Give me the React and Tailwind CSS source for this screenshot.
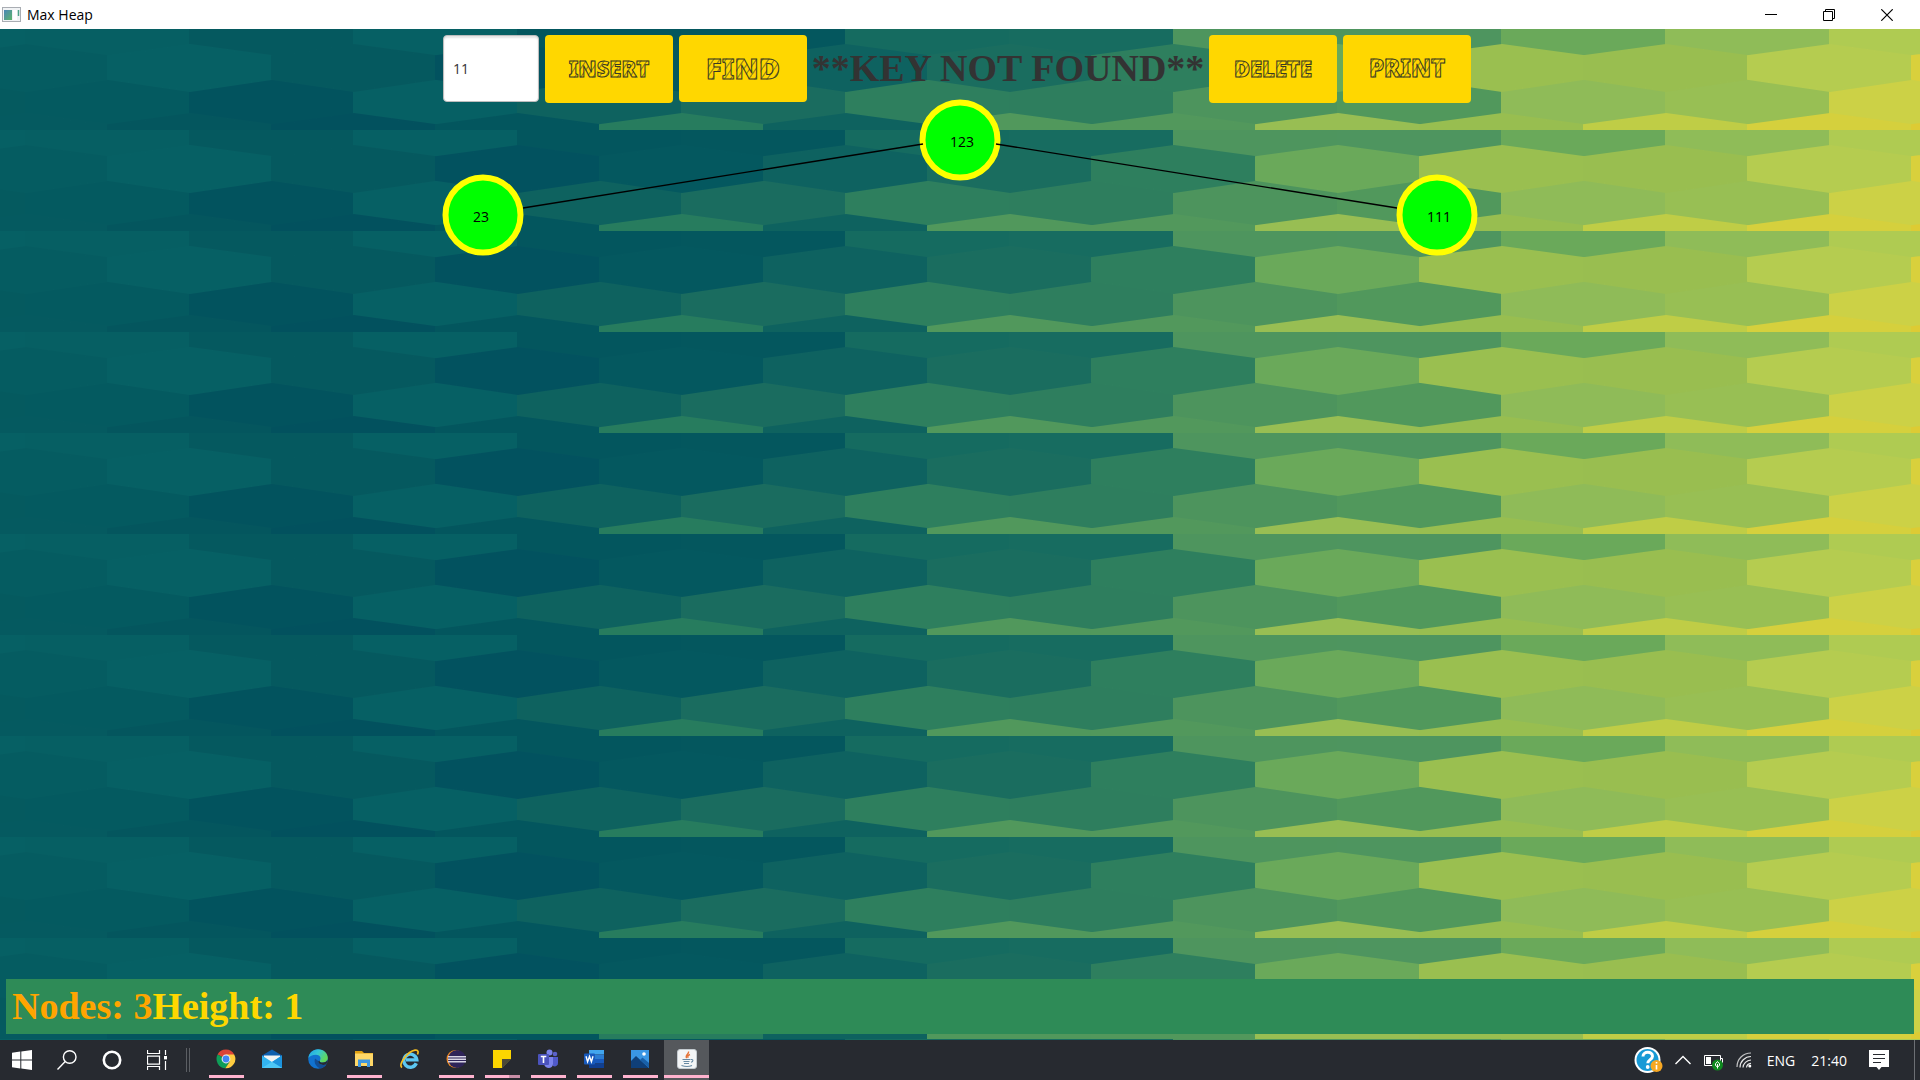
import React from "react";

const STEP = 164;
const EVEN_START = 26;
const ODD_START = 108;

/* One colour per hexagon, left to right, for each of the four rows in a tile. */
const ROWS = [
  {
    start: EVEN_START, top: -7, upper: 5, lower: 16, bottom: 27,
    colors: ["#066064", "#065f63", "#05595f", "#066064", "#03565e", "#04575e", "#156b60", "#176c60", "#4e955e", "#4e955f", "#6aa95a", "#8fbc58", "#afcb52"],
  },
  {
    start: EVEN_START, top: 50, upper: 62, lower: 85, bottom: 96,
    colors: ["#055a5f", "#045a60", "#02535e", "#066064", "#0e625f", "#1a6c5f", "#2e7f5e", "#2e7e5e", "#4d945d", "#51985c", "#8fbb58", "#98bf54", "#ccd146"],
  },
  {
    start: ODD_START, top: 16, upper: 27, lower: 50, bottom: 62,
    colors: ["#055c61", "#066064", "#05595f", "#02525f", "#04585f", "#0e6260", "#1a6d5f", "#2e7f5e", "#6aa95a", "#9abf50", "#99be50", "#b5cc50", "#d9d03c"],
  },
  {
    start: ODD_START, top: 85, upper: 96, lower: 119, bottom: 130,
    colors: ["#055a60", "#04565e", "#02515e", "#03565e", "#277c5e", "#0e625f", "#51985c", "#52985c", "#98be53", "#98be50", "#bfcd46", "#d5d03d", "#ddcb34"],
  },
];

function hexPoints(row, i) {
  const left = row.start + (i - 1) * STEP;
  const mid = left + STEP / 2;
  const right = left + STEP;
  if (row.top < 0) {
    return `${left},-4 ${right},-4 ${right},${row.lower} ${mid},${row.bottom} ${left},${row.lower}`;
  }
  return `${mid},${row.top} ${right},${row.upper} ${right},${row.lower} ${mid},${row.bottom} ${left},${row.lower} ${left},${row.upper}`;
}

function Backdrop() {
  return (
    <svg className="absolute inset-0 h-full w-full" aria-hidden="true">
      <defs>
        <pattern id="hexes" width="1920" height="101" patternUnits="userSpaceOnUse">
          {ROWS.map((row, r) =>
            row.colors.map((c, i) => (
              <polygon key={`${r}-${i}`} points={hexPoints(row, i)} fill={c} stroke={c} strokeWidth="2" />
            ))
          )}
        </pattern>
      </defs>
      <rect width="100%" height="100%" fill="url(#hexes)" />
    </svg>
  );
}

function TitleBar() {
  const control = "flex h-full w-[58px] items-center justify-center";
  return (
    <header className="flex h-[29px] items-center bg-white pl-[2px] pr-1">
      <svg width="19" height="16" viewBox="0 0 19 16" aria-hidden="true">
        <defs>
          <linearGradient id="appIcon" x1="0" y1="0" x2="1" y2="1">
            <stop offset="0" stopColor="#4a86b8" />
            <stop offset="1" stopColor="#5db56a" />
          </linearGradient>
        </defs>
        <rect x="0.5" y="0.5" width="18" height="14" fill="#f1f3f5" stroke="#a9adb3" />
        <rect x="2" y="3" width="8" height="10" fill="url(#appIcon)" />
        <rect x="11" y="3" width="4" height="10" fill="#fff" />
        <path d="M16.5 3v6" stroke="#4fa389" strokeWidth="1.5" />
      </svg>
      <h1 className="ml-[6px] text-[14px] leading-5 text-black">Max Heap</h1>
      <div className="ml-auto flex h-full">
        <button className={control} aria-label="Minimize">
          <svg width="12" height="12" viewBox="0 0 12 12"><path d="M0 5.5h12" stroke="#000" /></svg>
        </button>
        <button className={control} aria-label="Restore">
          <svg width="12" height="12" viewBox="0 0 12 12" fill="none" stroke="#000">
            <path d="M0.5 2.5h9v9h-9zM2.5 2.5v-2h9v9h-2" />
          </svg>
        </button>
        <button className={control} aria-label="Close">
          <svg width="12" height="12" viewBox="0 0 12 12"><path d="M0.3 0.3l11.4 11.4M11.7 0.3L0.3 11.7" stroke="#000" strokeWidth="1.2" /></svg>
        </button>
      </div>
    </header>
  );
}

const sketch =
  "bg-[repeating-linear-gradient(125deg,#ffd700_0px,#ffd700_3px,#8f8218_4px,#e6c40a_5px)] bg-clip-text text-transparent [-webkit-text-stroke:1px_#3a3a22] font-black font-['Noto_Sans']";

function ToolButton({ children, size, height }) {
  return (
    <button className={`${height} flex w-32 items-center justify-center rounded-[4px] bg-[#ffd700] pb-[2px]`}>
      <span className={`${sketch} ${size}`}>{children}</span>
    </button>
  );
}

function Toolbar() {
  return (
    <div className="flex items-start justify-center gap-[6px] pr-[6px] pt-[6px]">
      <input
        type="text"
        aria-label="Key"
        defaultValue="11"
        className="h-[67px] w-24 rounded-[4px] border border-[#bdbdbd] bg-white px-[9px] text-[14px] text-[#333] shadow-[inset_0_2px_2px_#e4e4e4] outline-none"
      />
      <ToolButton height="h-[68px]" size="text-[22px]">INSERT</ToolButton>
      <ToolButton height="h-[67px]" size="text-[29px]">FIND</ToolButton>
      <p className="flex h-[67px] w-[390px] items-center justify-center whitespace-nowrap font-['Liberation_Serif'] text-[38px] font-bold text-[#333]">
        **KEY NOT FOUND**
      </p>
      <ToolButton height="h-[68px]" size="text-[22px]">DELETE</ToolButton>
      <ToolButton height="h-[68px]" size="text-[24px]">PRINT</ToolButton>
    </div>
  );
}

const NODES = [
  { key: "123", x: 0, y: 37, tx: -10 },
  { key: "23", x: -477, y: 112, tx: -487 },
  { key: "111", x: 477, y: 112, tx: 467 },
];

function Tree() {
  return (
    <svg className="w-full flex-1 overflow-visible" role="img" aria-label="Heap tree">
      <svg x="50%" className="overflow-visible">
        {NODES.map((n) => (
          <g key={n.key}>
            <circle cx={n.x} cy={n.y} r="37.5" fill="#00ff00" stroke="#ffff00" strokeWidth="6" />
            <text x={n.tx} y={n.y + 7} fontSize="14" fill="#000">{n.key}</text>
          </g>
        ))}
        <path d="M-37 41L-437 105M36 41L437 105" stroke="#000" strokeWidth="1.3" />
      </svg>
    </svg>
  );
}

const Windows = () => (
  <svg width="20" height="20" viewBox="0 0 20 20" fill="#fff">
    <path d="M0 2.8L8.3 1.6V9.5H0zM9.3 1.4L20 0v9.5H9.3zM0 10.5h8.3v7.9L0 17.2zM9.3 10.5H20V20L9.3 18.5z" />
  </svg>
);
const Search = () => (
  <svg width="20" height="20" viewBox="0 0 20 20" fill="none" stroke="#fff" strokeWidth="1.4">
    <circle cx="12.7" cy="7" r="6.3" /><path d="M8.2 11.6L0.5 19.4" />
  </svg>
);
const Cortana = () => (
  <svg width="20" height="20" viewBox="0 0 20 20" fill="none" stroke="#fff">
    <circle cx="10" cy="10" r="8.2" strokeWidth="2.6" />
  </svg>
);
const TaskView = () => (
  <svg width="20" height="20" viewBox="0 0 20 20" fill="none" stroke="#fff" strokeWidth="1.2">
    <path d="M0.5 0v3.5h12V0M0.5 20v-3.5h12V20M0.5 6.2h12v8H0.5zM18.5 0v5M18.5 11v9" />
    <path d="M17 6h3v3.4h-3z" fill="#fff" stroke="none" />
  </svg>
);
const Chrome = () => (
  <svg width="20" height="20" viewBox="0 0 20 20">
    <path d="M10 10L1.6 5.6A9.3 9.3 0 0 1 18.2 5.6z" fill="#db4437" />
    <path d="M10 10L1.6 5.6A9.3 9.3 0 0 0 9.3 19.3L14 12.3z" fill="#0f9d58" />
    <path d="M10 5.6H18.2A9.3 9.3 0 0 1 9.3 19.3L14 12.3z" fill="#ffcd40" />
    <circle cx="10" cy="10" r="4.4" fill="#f1f1f1" /><circle cx="10" cy="10" r="3.4" fill="#4285f4" />
  </svg>
);
const Mail = () => (
  <svg width="20" height="20" viewBox="0 0 20 20">
    <path d="M0 6.5L10 0.5l10 6v4H0z" fill="#0f5fae" />
    <path d="M2 6.5h16v8H2z" fill="#f3f3f3" />
    <path d="M0 6.5l10 6.5 10-6.5V19H0z" fill="#32b4f0" />
    <path d="M10 13l10-6.5V19z" fill="#1c93dd" /><path d="M0 19l10-6.3L20 19z" fill="#4cc7f6" />
  </svg>
);
const Edge = () => (
  <svg width="20" height="20" viewBox="0 0 20 20">
    <defs>
      <linearGradient id="edgeTop" x1="0" y1="0" x2="1" y2="0.5">
        <stop offset="0" stopColor="#1fa0e6" /><stop offset="0.5" stopColor="#35c7d6" /><stop offset="1" stopColor="#62d957" />
      </linearGradient>
    </defs>
    <circle cx="10" cy="10" r="9.8" fill="#1172cf" />
    <path d="M0.3 9C1 4 5 0.2 10 0.2c6 0 9.8 4.3 9.8 8.5 0 3-2.2 4.8-5 4.8-2.4 0-3.5-1-3-1.8 2-3.2-.3-6-3.8-6C4.500 5.700 1.500 7 .3 9z" fill="url(#edgeTop)" />
    <path d="M7 9.500c-1.500 4.500 1.500 9 6 10 2.500-.8 4.500-2.300 5.600-4.300-4 2-8 .5-8.300-3.200z" fill="#124e95" />
    <path d="M11.8 11.7c-.8 1 .6 1.800 3 1.800 2 0 3.500-.8 4.300-2.200l.4 1-1.200 3c-3.500 1.500-7.800.4-8-3.200z" fill="#272a30" />
  </svg>
);
const Explorer = () => (
  <svg width="20" height="20" viewBox="0 0 20 20">
    <path d="M1 2h7l2 2h9v5H1z" fill="#e0a010" /><path d="M1 4.500h18V17H1z" fill="#ffd868" />
    <path d="M4 18v-7.500h12V18h-3v-4H7v4z" fill="#3f97e0" />
  </svg>
);
const Ie = () => (
  <svg width="20" height="20" viewBox="0 0 20 20" fill="none">
    <path d="M16.300 14.300A6.500 6.500 0 1 1 16.800 10.900H6" stroke="#5cc8f2" strokeWidth="3.4" />
    <path d="M2 18.500C-2 15.500 7.500 2.500 15 1.200c3.500-.6 3.500 1.800 2.500 4.300" stroke="#f5bd22" strokeWidth="1.700" />
  </svg>
);
const Eclipse = () => (
  <svg width="20" height="20" viewBox="0 0 20 20">
    <circle cx="9.500" cy="10" r="9" fill="#ee8a25" /><circle cx="11" cy="10" r="9" fill="#2f2459" />
    <path d="M2 7h18v1.500H2zM2 9.500h18V11H2zM2 12h18v1.500H2z" fill="#d8d5e4" />
  </svg>
);
const Sticky = () => (
  <svg width="20" height="20" viewBox="0 0 20 20">
    <path d="M1 1h18v9l-9 9H1z" fill="#fcd500" /><path d="M1 10h9v9H1z" fill="#fcd500" />
    <path d="M19 10v9h-9z" fill="#272a30" /><path d="M10 10h9l-9 9z" fill="#4b4938" />
  </svg>
);
const Teams = () => (
  <svg width="20" height="20" viewBox="0 0 20 20">
    <circle cx="17" cy="5" r="2.300" fill="#5b62c8" /><circle cx="11.500" cy="3.500" r="3" fill="#7b83eb" />
    <path d="M14 8h6v6c0 3-3 4-5 3z" fill="#5059c9" /><path d="M6 8h9v7c0 5-8 5.500-9 0z" fill="#7b83eb" />
    <rect x="0" y="5" width="11" height="11" rx="1" fill="#4b53bc" />
    <path d="M2.800 7.500h5.500M5.500 7.500v6.500" stroke="#fff" strokeWidth="1.600" />
  </svg>
);
const Word = () => (
  <svg width="20" height="20" viewBox="0 0 20 20">
    <path d="M5 1h15v4.500H5z" fill="#41a5ee" /><path d="M5 5.500h15V10H5z" fill="#2b7cd3" />
    <path d="M5 10h15v4.500H5z" fill="#185abd" /><path d="M5 14.500h15V19H5z" fill="#103f91" />
    <rect x="0" y="4.500" width="11" height="11" rx="1" fill="#185abd" />
    <path d="M2 7.200l1.600 5.600 1.900-5.400 1.900 5.400L9 7.200" fill="none" stroke="#fff" strokeWidth="1.400" />
  </svg>
);
const Photos = () => (
  <svg width="20" height="20" viewBox="0 0 20 20">
    <path d="M1 1h18v18H1z" fill="#3a96e4" /><path d="M1 12l5-5 13 12H1z" fill="#0f3f78" />
    <path d="M10 11l2.500-2.500L19 14v5z" fill="#1960a8" /><circle cx="14" cy="5" r="1.800" fill="#fff" />
  </svg>
);
const Java = () => (
  <svg width="20" height="20" viewBox="0 0 20 20" fill="none">
    <rect x="0.500" y="0.500" width="19" height="19" rx="2.500" fill="#f3f5f6" stroke="#c4cbd0" />
    <path d="M11.500 2.500c1 2.500-4 3.500-1.800 6.700M13 5.500c-2 .8-2.800 1.900-1.700 3.200" stroke="#e5743a" strokeWidth="1.400" />
    <path d="M5.500 10.500h8M6.500 12.500h6M7 14.500h5M4.500 16.500c3 1 8 1 10.500 0M14 10.500c2.500-.5 2.500 2 0 2.800" stroke="#6689a3" strokeWidth="1.100" />
  </svg>
);

const SYSTEM = [
  ["Start", Windows],
  ["Search", Search],
  ["Cortana", Cortana],
  ["Task View", TaskView],
];

const APPS = [
  ["Chrome", Chrome, "open"],
  ["Mail", Mail, ""],
  ["Edge", Edge, ""],
  ["File Explorer", Explorer, "open"],
  ["Internet Explorer", Ie, ""],
  ["Eclipse", Eclipse, "open"],
  ["Sticky Notes", Sticky, "multi"],
  ["Teams", Teams, "open"],
  ["Word", Word, "open"],
  ["Photos", Photos, "open"],
  ["Java", Java, "active"],
];

function AppButton({ name, Icon, state }) {
  return (
    <button
      aria-label={name}
      className={`flex h-full flex-col items-center justify-between pt-[9px] ${state === "active" ? "ml-px w-[45px] bg-[#55585c]" : "w-[46px]"} pb-[2px]`}
    >
      <Icon />
      {state === "open" && <span className="h-[3px] w-[35px] bg-[#ffb3cf]" />}
      {state === "active" && <span className="h-[3px] w-full bg-[#ffb3cf]" />}
      {state === "multi" && (
        <span className="flex h-[3px] w-[35px]">
          <span className="w-6 bg-[#ffb3cf]" />
          <span className="flex-1 bg-[#c98fa8]" />
        </span>
      )}
    </button>
  );
}

function Tray() {
  return (
    <div className="ml-auto flex h-full items-center text-[14px] text-white">
      <button aria-label="Help" className="mr-[12px]">
        <svg width="29" height="28" viewBox="0 0 29 28">
          <circle cx="13.500" cy="14" r="13" fill="#fff" /><circle cx="13.500" cy="14" r="11" fill="#189ad6" />
          <path d="M9 10.500c0-5.500 9.500-5.500 9.500-.3 0 3.300-4.700 3.500-4.700 7" fill="none" stroke="#fff" strokeWidth="3" />
          <circle cx="13.700" cy="21" r="1.900" fill="#fff" />
          <circle cx="22.500" cy="20" r="6" fill="#f7a823" />
          <path d="M22.500 19v4.500M22.500 16v1.600" stroke="#fff" strokeWidth="1.600" />
        </svg>
      </button>
      <button aria-label="Show hidden icons" className="mr-[13px]">
        <svg width="16" height="10" viewBox="0 0 16 10"><path d="M0.500 9L8 1.500 15.500 9" fill="none" stroke="#fff" strokeWidth="1.400" /></svg>
      </button>
      <button aria-label="Battery" className="mr-[13px] pt-[4px]">
        <svg width="19" height="17" viewBox="0 0 19 17">
          <path d="M0.500 1.500h16v10H0.500zM17 4.500h1.500v4H17" fill="none" stroke="#fff" />
          <path d="M2 3h5v7H2z" fill="#fff" />
          <circle cx="13.500" cy="11" r="5.500" fill="#0f8a1f" />
          <path d="M13.500 7.500l2 2.300v1.700l-2 1.500-2-1.500V9.800zM13.500 10v4.500" fill="none" stroke="#fff" />
        </svg>
      </button>
      <button aria-label="Network" className="mr-[15px]">
        <svg width="16" height="16" viewBox="0 0 16 16" fill="none" stroke="#e8e8e8" strokeWidth="1.200">
          <path d="M1 15C1 7 7 1 15 1" opacity="0.800" /><path d="M4 15.500C4 9.500 9 4.500 15 4.500M7 15.500C7.300 11.500 10.500 8.300 15 8M10.500 15.500c.3-2.300 2-4 4.500-4.200" />
          <circle cx="13.800" cy="14" r="1.500" fill="#fff" stroke="none" />
        </svg>
      </button>
      <button className="mr-[16px]">ENG</button>
      <button className="mr-[22px]">21:40</button>
      <button aria-label="Notifications" className="mr-[25px]">
        <svg width="20" height="20" viewBox="0 0 20 20">
          <path d="M0 0h20v17h-7.500L10 20l-2.500-3H0z" fill="#fff" />
          <path d="M4 4.500h12M4 8.500h12M4 12.500h8" stroke="#272a30" strokeWidth="1.200" />
        </svg>
      </button>
      <div className="mr-[5px] h-full w-px bg-[#6c6f74]" />
    </div>
  );
}

function Taskbar() {
  return (
    <nav className="flex h-10 bg-[#272a30]" aria-label="Taskbar">
      {SYSTEM.map(([name, Icon]) => (
        <button key={name} aria-label={name} className="flex h-full w-[45px] items-center justify-center pr-px">
          <Icon />
        </button>
      ))}
      <div className="flex w-[23px] items-center gap-[2px] pl-[6px]">
        <span className="h-6 w-px bg-[#5b5e63]" />
        <span className="h-6 w-px bg-[#5b5e63]" />
      </div>
      {APPS.map(([name, Icon, state]) => (
        <AppButton key={name} name={name} Icon={Icon} state={state} />
      ))}
      <Tray />
    </nav>
  );
}

export default function App() {
  return (
    <div className="flex min-h-screen flex-col font-['Open_Sans',sans-serif]">
      <TitleBar />
      <main className="relative flex flex-1 flex-col">
        <Backdrop />
        <div className="relative flex flex-1 flex-col">
          <Toolbar />
          <Tree />
          <footer className="m-[6px] flex h-[55px] items-center bg-[#2e8b57] px-[6px] font-['Liberation_Serif'] text-[38px] font-bold">
            <span className="text-[#ffa500]">Nodes: 3</span>
            <span className="text-[#ffd700]">Height: 1</span>
          </footer>
        </div>
      </main>
      <Taskbar />
    </div>
  );
}
